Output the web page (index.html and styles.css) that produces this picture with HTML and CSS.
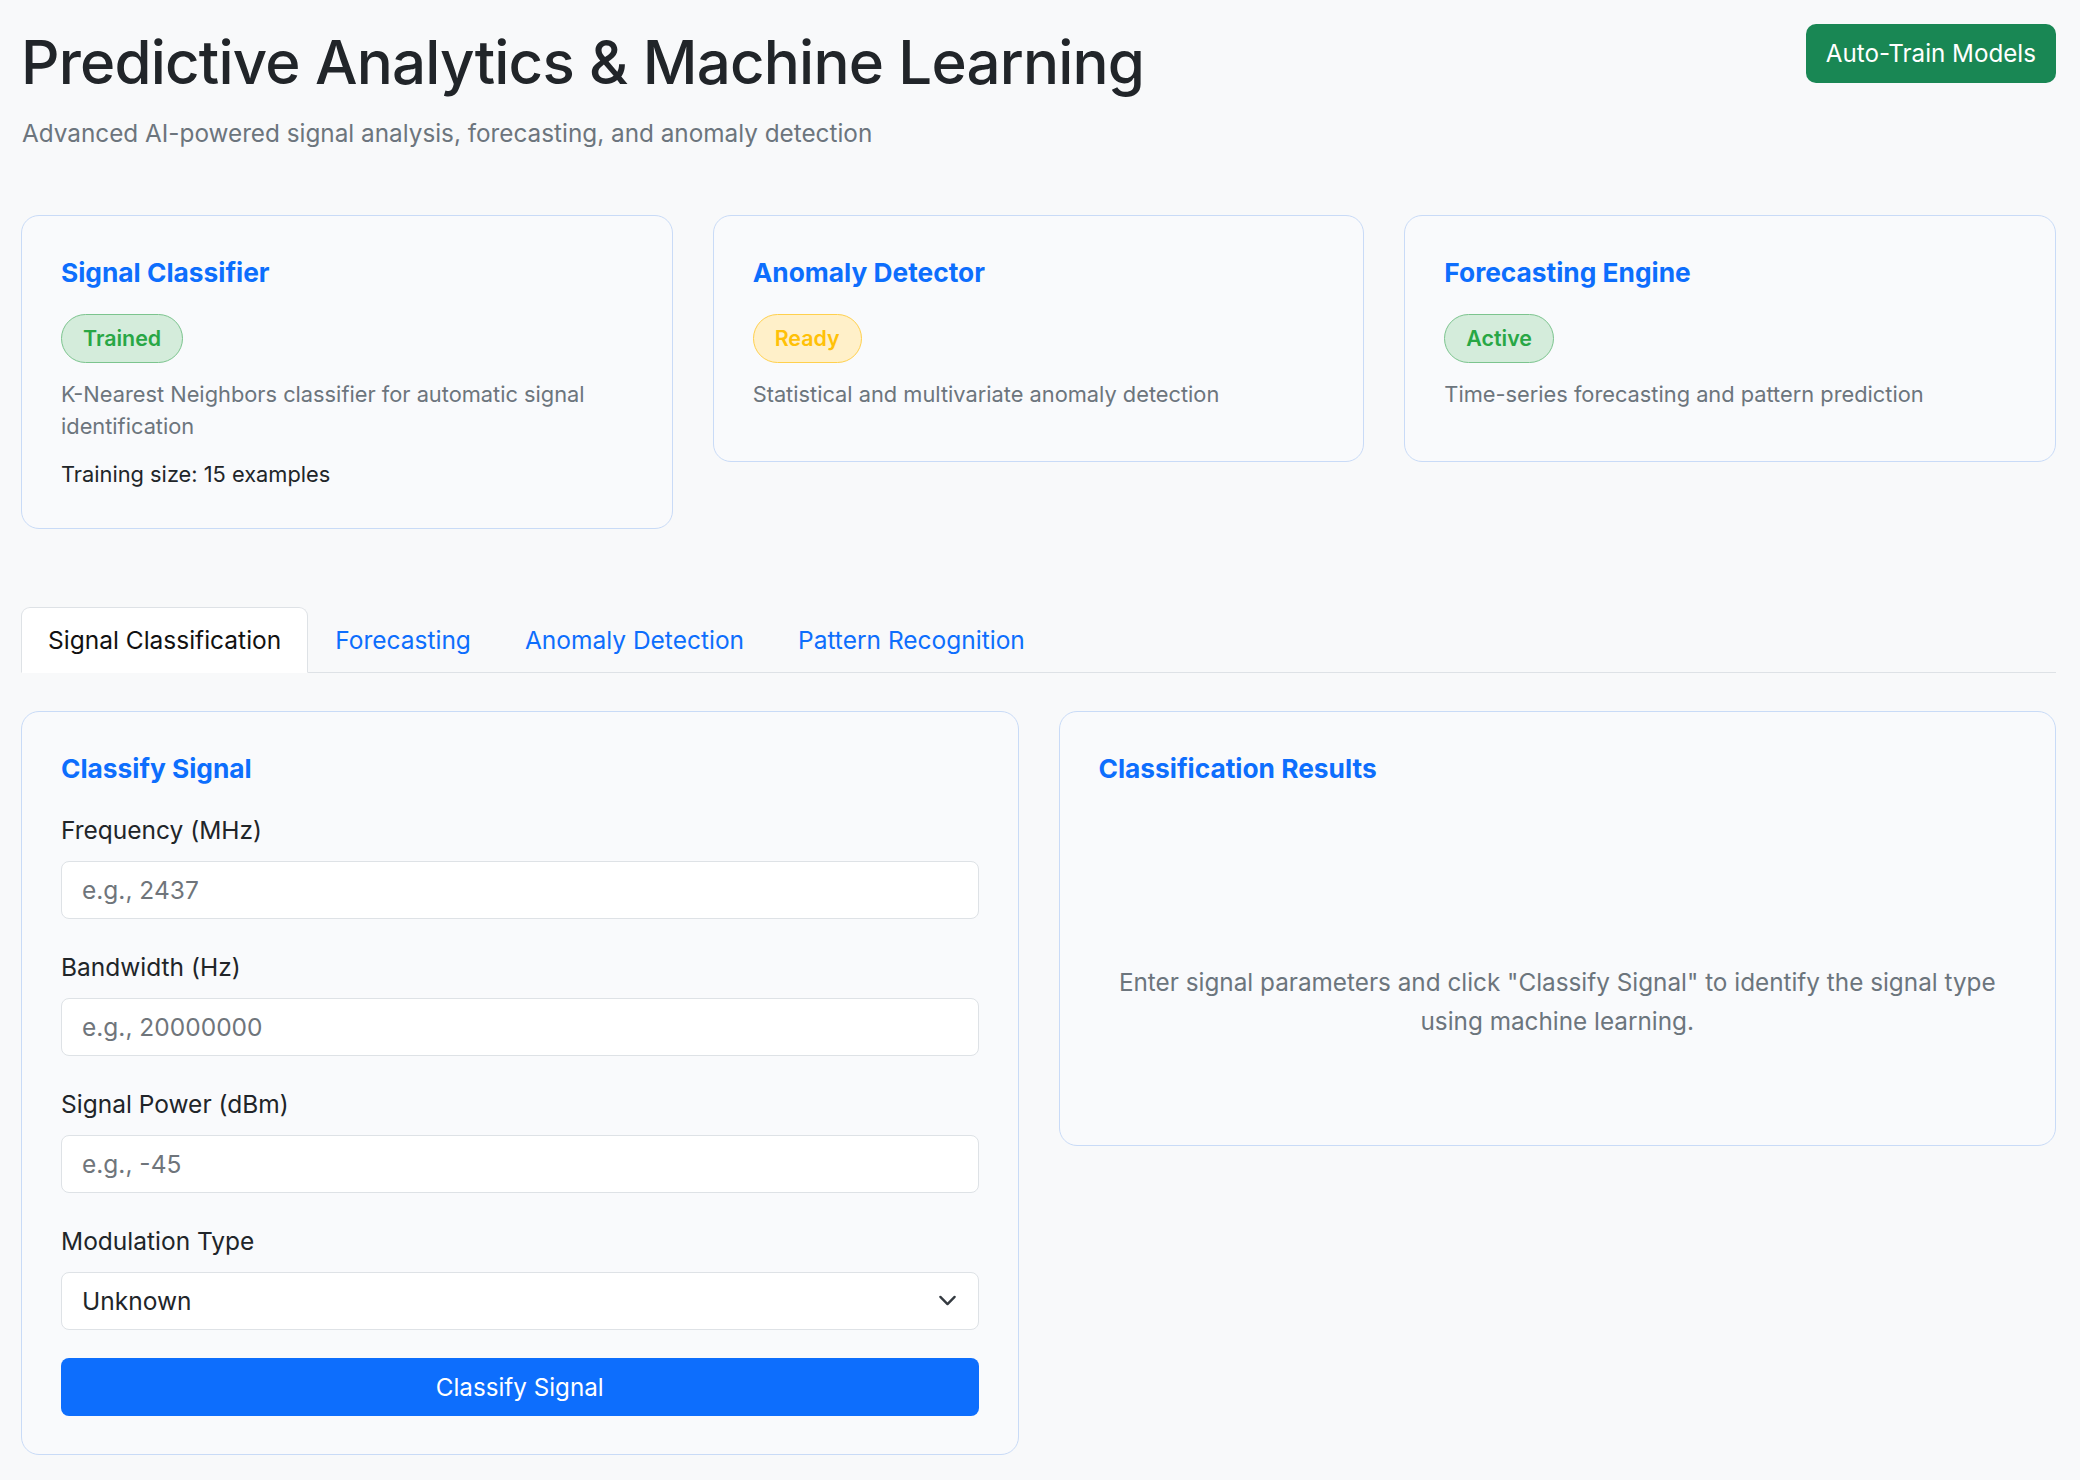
FILE: index.html
```html
<!DOCTYPE html>
<html lang="en">
<head>
<meta charset="utf-8">
<title>Predictive Analytics &amp; Machine Learning</title>
<link rel="stylesheet" href="styles.css">
</head>
<body>
<div class="page">
  <header class="header">
    <div class="header-text">
      <h1 class="title">Predictive Analytics &amp; Machine Learning</h1>
      <p class="subtitle">Advanced AI-powered signal analysis, forecasting, and anomaly detection</p>
    </div>
    <button class="btn-train" type="button">Auto-Train Models</button>
  </header>

  <section class="model-cards">
    <div class="card">
      <h5 class="card-title">Signal Classifier</h5>
      <span class="badge badge-green">Trained</span>
      <p class="card-desc">K-Nearest Neighbors classifier for automatic signal identification</p>
      <p class="card-meta">Training size: 15 examples</p>
    </div>
    <div class="card">
      <h5 class="card-title">Anomaly Detector</h5>
      <span class="badge badge-yellow">Ready</span>
      <p class="card-desc">Statistical and multivariate anomaly detection</p>
    </div>
    <div class="card">
      <h5 class="card-title">Forecasting Engine</h5>
      <span class="badge badge-green">Active</span>
      <p class="card-desc">Time-series forecasting and pattern prediction</p>
    </div>
  </section>

  <nav class="tabs">
    <a class="tab active">Signal Classification</a>
    <a class="tab">Forecasting</a>
    <a class="tab">Anomaly Detection</a>
    <a class="tab">Pattern Recognition</a>
  </nav>

  <section class="panels">
    <div class="card panel">
      <h5 class="card-title panel-title">Classify Signal</h5>
      <div class="field">
        <label class="label">Frequency (MHz)</label>
        <input class="input" type="text" placeholder="e.g., 2437">
      </div>
      <div class="field">
        <label class="label">Bandwidth (Hz)</label>
        <input class="input" type="text" placeholder="e.g., 20000000">
      </div>
      <div class="field">
        <label class="label">Signal Power (dBm)</label>
        <input class="input" type="text" placeholder="e.g., -45">
      </div>
      <div class="field field-last">
        <label class="label">Modulation Type</label>
        <div class="select-wrap">
          <select class="input select">
            <option>Unknown</option>
          </select>
          <svg class="chevron" viewBox="0 0 16 16" width="19" height="19" aria-hidden="true"><path d="M2 5l6 6 6-6" fill="none" stroke="#343a40" stroke-width="2" stroke-linecap="round" stroke-linejoin="round"/></svg>
        </div>
      </div>
      <button class="btn-classify" type="button">Classify Signal</button>
    </div>

    <div class="card panel">
      <h5 class="card-title panel-title">Classification Results</h5>
      <div class="empty">
        <p>Enter signal parameters and click "Classify Signal" to identify the signal type using machine learning.</p>
      </div>
    </div>
  </section>
</div>
</body>
</html>
```

FILE: styles.css
```css
* {
  box-sizing: border-box;
}

html, body {
  margin: 0;
  padding: 0;
}

body {
  background: #f8f9fa;
  font-family: Inter, "Noto Sans", "Liberation Sans", sans-serif;
  color: #212529;
  font-size: 24px;
  line-height: 36px;
}

.page {
  padding: 24px 24px 26px 21px;
}

.header {
  display: flex;
  justify-content: space-between;
  align-items: flex-start;
}

.title {
  margin: 0;
  font-size: 60px;
  line-height: 76px;
  font-weight: 500;
  letter-spacing: -0.8px;
  color: #212529;
}

.subtitle {
  margin: 14px 0 0 1px;
  font-size: 24.3px;
  line-height: 38px;
  color: #6c757d;
}

.btn-train {
  height: 59px;
  padding: 0 20px;
  border: none;
  border-radius: 10px;
  background: #198754;
  color: #fff;
  font-family: inherit;
  font-size: 24.2px;
  line-height: 59px;
}

.model-cards {
  display: grid;
  grid-template-columns: repeat(3, 1fr);
  gap: 40px;
  align-items: start;
  margin-top: 63px;
}

.card {
  background: #f9fafc;
  border: 1px solid #c9dbf7;
  border-radius: 18px;
  padding: 41px 39px 38px 39px;
}

.card-title {
  margin: 0 0 25px;
  font-size: 26.3px;
  line-height: 32px;
  font-weight: 700;
  color: #0d6efd;
}

.badge {
  display: block;
  width: fit-content;
  height: 49px;
  line-height: 47px;
  padding: 0 21px;
  border-radius: 25px;
  border: 1px solid;
  font-size: 21.4px;
  font-weight: 600;
}

.badge-green {
  background: #d4ecdb;
  border-color: #7cc48e;
  color: #28a745;
}

.badge-yellow {
  background: #fff0c9;
  border-color: #ffd04d;
  color: #ffc107;
}

.card-desc {
  margin: 15px 0 13px;
  font-size: 21.8px;
  line-height: 32px;
  color: #6c757d;
}

.card-meta {
  margin: 16px 0 0;
  font-size: 21.8px;
  line-height: 32px;
  color: #212529;
}

.card .card-desc:has(+ .card-meta) {
  margin-bottom: 0;
}

.tabs {
  display: flex;
  margin-top: 78px;
  border-bottom: 1px solid #dee2e6;
}

.tab {
  display: block;
  padding: 14px 26px;
  margin-bottom: -1px;
  border: 1px solid transparent;
  border-radius: 9px 9px 0 0;
  color: #0d6efd;
  font-size: 24.5px;
  line-height: 36px;
  cursor: pointer;
}

.tab.active {
  background: #fff;
  border-color: #dee2e6 #dee2e6 #fff;
  color: #111;
}

.panels {
  display: grid;
  grid-template-columns: 1fr 1fr;
  gap: 40px;
  align-items: start;
  margin-top: 38px;
}

.panel-title {
  margin-bottom: 27px;
}

.field {
  margin-bottom: 30px;
}

.field-last {
  margin-bottom: 28px;
}

.label {
  display: block;
  margin-bottom: 13px;
  font-size: 24.5px;
  line-height: 36px;
  color: #212529;
}

.input {
  display: block;
  width: 100%;
  height: 58px;
  padding: 0 20px;
  border: 1px solid #dee2e6;
  border-radius: 8px;
  background: #fff;
  font-family: inherit;
  font-size: 24.5px;
  color: #212529;
  outline: none;
}

.input::placeholder {
  color: #6f757b;
}

.select-wrap {
  position: relative;
}

.select {
  appearance: none;
  -webkit-appearance: none;
}

.chevron {
  position: absolute;
  right: 22px;
  top: 19px;
  width: 19px;
  height: 19px;
  pointer-events: none;
}

.btn-classify {
  display: block;
  width: 100%;
  height: 58px;
  border: none;
  border-radius: 8px;
  background: #0d6efd;
  color: #fff;
  font-family: inherit;
  font-size: 24.2px;
}

.empty {
  padding: 151px 0 66px;
  text-align: center;
}

.empty p {
  margin: 0;
  font-size: 24.3px;
  line-height: 39px;
  color: #6c757d;
}
```
